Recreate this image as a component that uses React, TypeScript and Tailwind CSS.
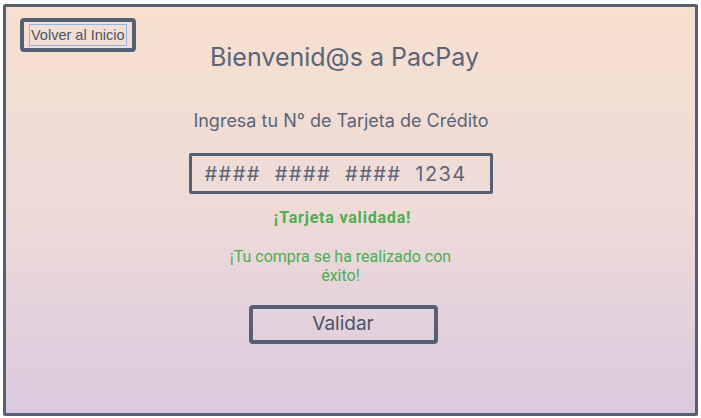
import React from "react";

export default function App() {
  return (
    <div className="w-[701px] h-[418px] bg-white p-[3px]" style={{ fontFamily: "Inter, 'Noto Sans', sans-serif" }}>
      <div className="w-[695px] h-[412px] mt-[1px] border-[3px] border-[#576073] rounded-[2px] bg-gradient-to-b from-[#f6e0cf] via-[#eedbd8] to-[#dbc9df] flex flex-col text-[#576073]">
        <div className="pl-[14px] pt-[11px] self-start">
          <button className="border-[4px] border-[#556074] rounded-[4px] px-[5px] py-[2px] bg-[#f3dfd3]">
            <span className="block border border-[#8fb4e6] px-[1px] py-[1px] text-[14.5px] leading-[18px] text-[#4b5466]" style={{ fontFamily: "'Liberation Sans', Arial, sans-serif" }}>
              Volver al Inicio
            </span>
          </button>
        </div>
        <div className="flex flex-col items-center pr-[16px]">
          <h1 className="-mt-[11px] ml-[4px] text-[25px] leading-[32px] text-[#5a6478] whitespace-nowrap">Bienvenid@s a PacPay</h1>
          <p className="mt-[37px] mr-[3px] text-[18px] leading-[22px] text-[#5a6478] whitespace-nowrap">Ingresa tu N° de Tarjeta de Crédito</p>
          <div className="mt-[21px] mr-[4px] w-[304px] h-[41px] border-[3px] border-[#576073] rounded-[2px] flex items-center pl-[13px]">
            <span className="text-[20px] tracking-[1.4px] [word-spacing:7px] text-[#5d6578] whitespace-nowrap">#### #### #### 1234</span>
          </div>
          <p className="mt-[15px] text-[16px] leading-[18px] font-bold tracking-[0.8px] text-[#4caf50]" style={{ fontFamily: "Roboto, 'Noto Sans', sans-serif" }}>¡Tarjeta validada!</p>
          <p className="mt-[20px] mr-[4px] w-[236px] text-center text-[16px] leading-[19px] text-[#4caf50]" style={{ fontFamily: "Roboto, 'Noto Sans', sans-serif" }}>¡Tu compra se ha realizado con éxito!</p>
          <button className="mt-[20px] ml-[1px] w-[189px] h-[39px] border-[4px] border-[#556074] rounded-[4px] text-[19px] text-[#4b5466]">Validar</button>
        </div>
      </div>
    </div>
  );
}
